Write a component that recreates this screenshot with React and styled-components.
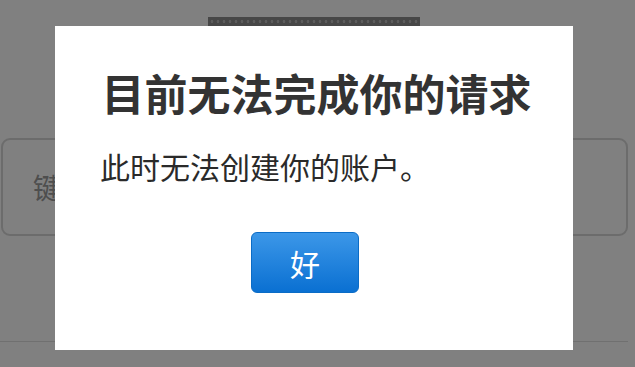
import React from 'react';
import styled, { createGlobalStyle } from 'styled-components';

const CJK_FONT = '"Noto Sans CJK SC", "Noto Sans", sans-serif';

const GlobalStyle = createGlobalStyle`
  html, body {
    margin: 0;
    padding: 0;
    background: #808080;
  }
  body {
    font-family: ${CJK_FONT};
  }
`;

const Page = styled.div`
  display: flex;
  flex-direction: column;
  box-sizing: border-box;
  width: 635px;
  height: 367px;
  padding-top: 17px;
  background: #808080;
  overflow: hidden;
`;

// dark dotted strip peeking out above the dialog
const Grabber = styled.div`
  align-self: flex-start;
  margin-left: 208px;
  width: 212px;
  height: 9px;
  background-color: #474747;
  background-image: radial-gradient(circle, #5c5c5c 1.2px, transparent 1.6px);
  background-size: 6px 9px;
  background-position: 1px 0;
`;

const Field = styled.div`
  display: flex;
  align-items: center;
  box-sizing: border-box;
  margin: 112px 7px 0 1px;
  height: 98px;
  padding-left: 30px;
  border: 2px solid #6c6c6c;
  border-radius: 9px;
  font-size: 28px;
  color: #4e4e4e;
`;

const Divider = styled.div`
  margin: 105px 7px 0 0;
  height: 1px;
  background: #707070;
`;

const Overlay = styled.div`
  position: fixed;
  inset: 0;
  display: flex;
  align-items: flex-start;
  padding: 26px 0 0 55px;
`;

const Dialog = styled.div`
  display: flex;
  flex-direction: column;
  box-sizing: border-box;
  width: 518px;
  height: 324px;
  padding: 40px 40px 0 45px;
  background: #ffffff;
`;

const Title = styled.h1`
  margin: 0;
  font-size: 43px;
  line-height: 52px;
  font-weight: 700;
  text-align: center;
  color: #333333;
  white-space: nowrap;
`;

const Message = styled.p`
  margin: 30px 0 0 0;
  font-size: 30px;
  line-height: 36px;
  font-weight: 400;
  color: #2a2a2a;
  white-space: nowrap;
`;

const OkButton = styled.button`
  align-self: flex-start;
  margin: 48px 0 0 151px;
  width: 108px;
  height: 61px;
  padding: 0;
  border: 1px solid #0b6cc6;
  border-radius: 6px;
  background: linear-gradient(#3c97e8, #0a70d2);
  color: #ffffff;
  font-family: ${CJK_FONT};
  font-size: 30px;
  line-height: 1;
`;

export default function App() {
  return (
    <>
      <GlobalStyle />
      <Page>
        <Grabber />
        <Field>键入</Field>
        <Divider />
      </Page>
      <Overlay>
        <Dialog>
          <Title>目前无法完成你的请求</Title>
          <Message>此时无法创建你的账户。</Message>
          <OkButton type="button">好</OkButton>
        </Dialog>
      </Overlay>
    </>
  );
}
